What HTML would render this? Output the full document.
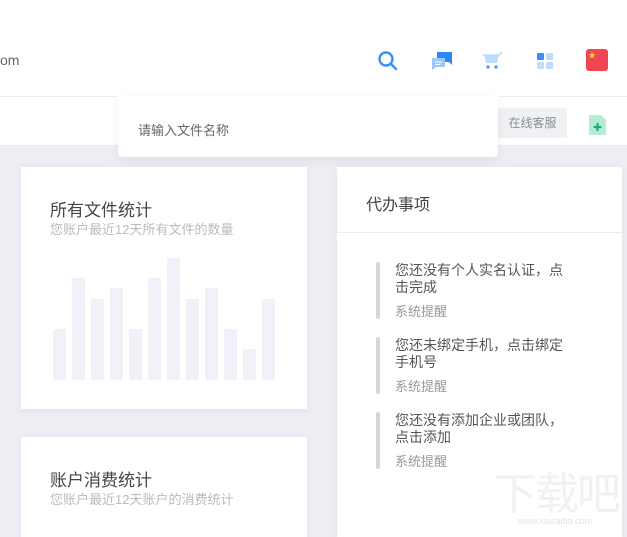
<!DOCTYPE html>
<html><head><meta charset="utf-8"><style>
*{margin:0;padding:0;box-sizing:border-box}
body{width:627px;height:529px;overflow:hidden;background:#ededf3;font-family:"Liberation Sans","Noto Sans CJK SC",sans-serif;position:relative}
.abs{position:absolute}
.card{position:absolute;background:#fff;box-shadow:0 2px 10px rgba(0,0,0,.05)}
.bar{position:absolute;width:13px;background:#f1f1f9;bottom:0}
.item{position:absolute;left:376px;width:220px}
.item .ln{position:absolute;left:0;top:0;width:4px;background:#d6d6d6;border-radius:2px}
.item .t{position:absolute;left:19px;font-size:14px;line-height:17px;color:#555;top:0;white-space:nowrap}
.item .s{position:absolute;left:19px;font-size:13px;color:#999}
</style></head><body>
<div class="abs" style="left:0;top:0;width:627px;height:96px;background:#fff"></div>
<div class="abs" style="left:0;top:96px;width:627px;height:1px;background:#ececf3"></div>
<div class="abs" style="left:0;top:97px;width:627px;height:48px;background:#fff"></div>
<div class="abs" style="left:0;top:52px;font-size:14px;color:#666">om</div>
<svg class="abs" style="left:377px;top:50px" width="22" height="22" viewBox="0 0 22 22"><circle cx="9" cy="9" r="6.5" fill="none" stroke="#3a8ef6" stroke-width="2.4"/><path d="M14 14l5 5" stroke="#3a8ef6" stroke-width="2.4" stroke-linecap="round"/></svg>
<svg class="abs" style="left:431px;top:51px" width="22" height="20" viewBox="0 0 22 20"><path d="M6 1h15v13l-3-3H6z" fill="#2f86f6"/><path d="M1 7h13v9H5l-4 3z" fill="#9cc8fb"/><path d="M4 11h7M4 13.5h5" stroke="#fff" stroke-width="1"/></svg>
<svg class="abs" style="left:482px;top:51px" width="22" height="20" viewBox="0 0 22 20"><path d="M1 4h16l3-3" fill="none" stroke="#bfdcfd" stroke-width="1.6"/><path d="M2 4h15l-2 8H4z" fill="#bfdcfd"/><circle cx="6" cy="16" r="1.6" fill="#3a8ef6"/><circle cx="14" cy="16" r="1.6" fill="#3a8ef6"/></svg>
<div class="abs" style="left:537px;top:53px;width:7px;height:7px;background:#3a8ef6;border-radius:1px"></div>
<div class="abs" style="left:546px;top:53px;width:7px;height:7px;background:#bfdcfd;border-radius:1px"></div>
<div class="abs" style="left:537px;top:62px;width:7px;height:7px;background:#bfdcfd;border-radius:1px"></div>
<div class="abs" style="left:546px;top:62px;width:7px;height:7px;background:#bfdcfd;border-radius:1px"></div>
<div class="abs" style="left:586px;top:49px;width:22px;height:22px;background:#f04552;border-radius:3px;color:#ffd33a;font-size:8px;line-height:10px;padding:2px 0 0 2px">★</div>
<div class="abs" style="left:498px;top:108px;width:69px;height:30px;background:#f0f1f5;color:#8a8c99;font-size:12px;line-height:30px;text-align:center">在线客服</div>
<svg class="abs" style="left:589px;top:115px" width="17" height="20" viewBox="0 0 17 20"><path d="M0 0h12l5 5v15H0z" fill="#b6ecd6"/><path d="M8.5 8v8M4.5 12h8" stroke="#19b27a" stroke-width="2.2"/></svg>
<div class="abs" style="left:118px;top:96px;width:380px;height:61px;background:#fff;border-radius:0 0 4px 4px;box-shadow:0 4px 12px rgba(0,0,0,.06)"></div>
<div class="abs" style="left:138px;top:120px;font-size:13px;color:#666">请输入文件名称</div>
<div class="card" style="left:21px;top:167px;width:286px;height:242px"></div>
<div class="abs" style="left:50px;top:196px;font-size:17px;color:#444">所有文件统计</div>
<div class="abs" style="left:50px;top:219px;font-size:13px;color:#bbb">您账户最近12天所有文件的数量</div>
<div class="bar" style="left:53px;top:329px;height:51px"></div>
<div class="bar" style="left:72px;top:278px;height:102px"></div>
<div class="bar" style="left:91px;top:299px;height:81px"></div>
<div class="bar" style="left:110px;top:288px;height:92px"></div>
<div class="bar" style="left:129px;top:329px;height:51px"></div>
<div class="bar" style="left:148px;top:278px;height:102px"></div>
<div class="bar" style="left:167px;top:258px;height:122px"></div>
<div class="bar" style="left:186px;top:299px;height:81px"></div>
<div class="bar" style="left:205px;top:288px;height:92px"></div>
<div class="bar" style="left:224px;top:329px;height:51px"></div>
<div class="bar" style="left:243px;top:349px;height:31px"></div>
<div class="bar" style="left:262px;top:299px;height:81px"></div>
<div class="card" style="left:21px;top:437px;width:286px;height:100px"></div>
<div class="abs" style="left:50px;top:466px;font-size:17px;color:#444">账户消费统计</div>
<div class="abs" style="left:50px;top:489px;font-size:13px;color:#bbb">您账户最近12天账户的消费统计</div>
<div class="card" style="left:337px;top:167px;width:285px;height:370px"></div>
<div class="abs" style="left:337px;top:232px;width:285px;height:1px;background:#ececf0"></div>
<div class="abs" style="left:366px;top:191px;font-size:16px;color:#444">代办事项</div>
<div class="item" style="top:262px"><div class="ln" style="height:57px"></div><div class="t">您还没有个人实名认证，点<br>击完成</div><div class="s" style="top:39px">系统提醒</div></div>
<div class="item" style="top:337px"><div class="ln" style="height:57px"></div><div class="t">您还未绑定手机，点击绑定<br>手机号</div><div class="s" style="top:39px">系统提醒</div></div>
<div class="item" style="top:412px"><div class="ln" style="height:57px"></div><div class="t">您还没有添加企业或团队，<br>点击添加</div><div class="s" style="top:39px">系统提醒</div></div>
<div class="abs" style="left:493px;top:470px;font-size:44px;color:#f1f1f1;letter-spacing:-2px;line-height:50px">下载吧</div>
<div class="abs" style="left:518px;top:516px;font-size:9px;color:#e4e4e4">www.xiazaiba.com</div>
</body></html>
